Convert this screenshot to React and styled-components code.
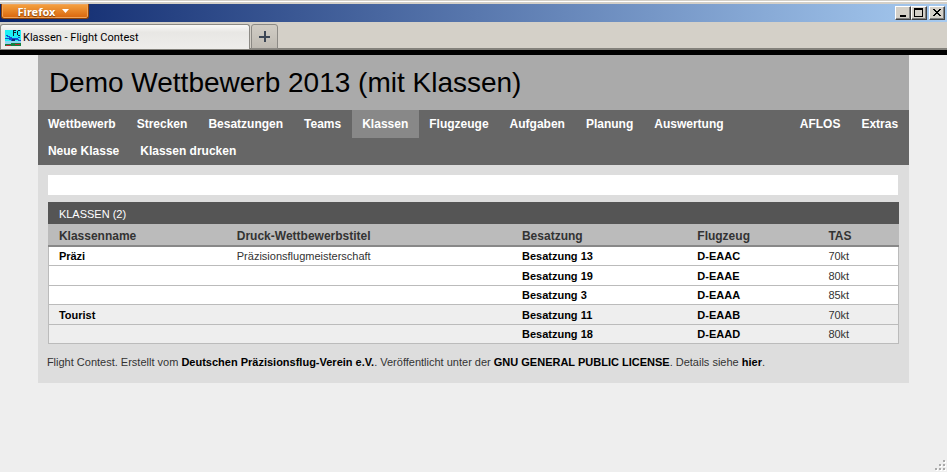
import React from "react";
import styled, { createGlobalStyle } from "styled-components";

const GlobalStyle = createGlobalStyle`
  * { box-sizing: border-box; }
  html, body { margin: 0; padding: 0; }
  body {
    background: #eee;
    color: #333;
    font: 11px/16px "Liberation Sans", Arial, sans-serif;
  }
  a { color: inherit; text-decoration: none; }
  button { font: inherit; padding: 0; margin: 0; }
`;

const Window = styled.div`
  display: flex;
  flex-direction: column;
  min-height: 100vh;
`;

const TitleBar = styled.header`
  display: flex;
  justify-content: space-between;
  align-items: flex-start;
  height: 22px;
  padding: 4px 2px 0 1px;
  background:
    linear-gradient(#d4d0c8 0 1px, #fff 1px 2px, #d4d0c8 2px 4px, transparent 4px),
    linear-gradient(to right, #0a246a, #a6caf0);
`;

const AppButton = styled.button`
  display: flex;
  align-items: center;
  justify-content: center;
  gap: 7px;
  width: 88px;
  height: 15px;
  padding-right: 3px;
  border: 1px solid #8d4308;
  border-top: 0;
  border-radius: 0 0 3px 3px;
  background: linear-gradient(#f5a341, #d9650c);
  box-shadow: inset 0 0 0 1px #f0a45a;
  color: #fff;
  font: bold 11px/15px "Noto Sans", sans-serif;
  text-shadow: 0 1px 1px #7a3a00;
`;

const WindowButtons = styled.div`
  display: flex;
  padding-top: 2px;
`;

const WindowButton = styled.button`
  display: grid;
  place-items: center;
  width: 16px;
  height: 14px;
  margin-left: ${(p) => (p.$spaced ? "2px" : "0")};
  border: 1px solid;
  border-color: #fff #404040 #404040 #fff;
  box-shadow: inset -1px -1px 0 #808080;
  background: #d4d0c8;
  color: #000;
`;

const TabStrip = styled.nav`
  display: flex;
  align-items: flex-end;
  gap: 1px;
  height: 33px;
  padding-bottom: 1px;
  border-bottom: 5px solid #000;
  background: linear-gradient(#d4d0c8 0 26px, #84827c 26px);
`;

const Tab = styled.button`
  display: flex;
  align-items: center;
  gap: 2px;
  width: 250px;
  height: 25px;
  padding: 1px 4px 0;
  border: 1px solid #8c8a85;
  border-bottom: 0;
  border-radius: 3px 3px 0 0;
  background: linear-gradient(#fafaf9, #e8e7e4 30%, #eeedeb);
  color: #000;
  font: 11px/16px Roboto, sans-serif;
`;

const NewTab = styled.button`
  display: grid;
  place-items: center;
  width: 27px;
  height: 25px;
  border: 1px solid #8c8a85;
  border-radius: 3px 3px 0 0;
  background: linear-gradient(#d0ccc4, #bfbbb3);
`;

const Page = styled.div`
  width: 92%;
  margin: 0 auto;
  background: #ddd;
`;

const Title = styled.h1`
  margin: 0;
  padding: 12px 11px 11px;
  background: #aaa;
  color: #000;
  font-size: 28px;
  font-weight: normal;
  line-height: 32px;
`;

const Menu = styled.nav`
  background: #666;
  padding-bottom: 1px;
`;

const MenuRow = styled.div`
  display: flex;
`;

const MenuLink = styled.a`
  padding: 0 11px 0 10px;
  background: ${(p) => (p.$active ? "#888" : "transparent")};
  color: #fff;
  font-size: 12px;
  font-weight: bold;
  line-height: ${(p) => (p.$sub ? "26px" : "28px")};
`;

const Spacer = styled.span`
  flex: 1;
`;

const Content = styled.main`
  padding: 10px 10px 0;
`;

const MessageBox = styled.div`
  height: 20px;
  margin: 0 1px 7px 0;
  background: #fff;
`;

const Table = styled.table`
  width: 100%;
  table-layout: fixed;
  border-spacing: 0;
`;

const Heading = styled.th`
  height: ${(p) => (p.$main ? "22px" : "23px")};
  padding: ${(p) => (p.$main ? "1px 11px 0" : "2px 11px 0")};
  border-bottom: ${(p) => (p.$main ? "0" : "2px solid #888")};
  background: ${(p) => (p.$main ? "#555" : "#bbb")};
  color: ${(p) => (p.$main ? "#fff" : "#333")};
  font-size: ${(p) => (p.$main ? "11px" : "12px")};
  font-weight: ${(p) => (p.$main ? "normal" : "bold")};
  text-align: left;
`;

const Row = styled.tr`
  height: 19px;
  background: ${(p) => (p.$shaded ? "#eee" : "#fff")};
  &:nth-child(even) { height: 20px; }
`;

const Cell = styled.td`
  padding: 0 11px;
  border-bottom: 1px solid #bbb;
  &:first-child { border-left: 1px solid #bbb; padding-left: 10px; }
  &:last-child { border-right: 1px solid #bbb; }
`;

const StrongLink = styled.a`
  color: #000;
  font-weight: bold;
`;

const Footer = styled.footer`
  padding: 10px 9px 13px;
`;

const Grip = styled.svg`
  align-self: flex-end;
  margin-top: auto;
`;

const Col = styled.col`
  width: ${(p) => p.$share}%;
`;

const menu = ["Wettbewerb", "Strecken", "Besatzungen", "Teams", "Klassen", "Flugzeuge", "Aufgaben", "Planung", "Auswertung"];
const extras = ["AFLOS", "Extras"];
const actions = ["Neue Klasse", "Klassen drucken"];
const headings = ["Klassenname", "Druck-Wettbewerbstitel", "Besatzung", "Flugzeug", "TAS"];
const shares = [20.9, 33.5, 20.6, 15.4, 9.6];
const rows = [
  { name: "Präzi", title: "Präzisionsflugmeisterschaft", crew: "Besatzung 13", plane: "D-EAAC", tas: "70kt" },
  { crew: "Besatzung 19", plane: "D-EAAE", tas: "80kt" },
  { crew: "Besatzung 3", plane: "D-EAAA", tas: "85kt" },
  { name: "Tourist", crew: "Besatzung 11", plane: "D-EAAB", tas: "70kt", shaded: true },
  { crew: "Besatzung 18", plane: "D-EAAD", tas: "80kt", shaded: true },
];

function Favicon() {
  return (
    <svg width="16" height="16" viewBox="0 0 16 16" shapeRendering="crispEdges" aria-hidden="true">
      <path fill="#1cf0f4" d="M0 0h16v16H0z" />
      <path fill="#8cd4ee" d="M0 11h16v3H0z" />
      <path fill="#12803c" d="M0 14h6v-1h10v3H0z" />
      <path fill="#b82830" d="M1 15h5v1H1zM10 14h5v1h-5z" />
      <path fill="#123" d="M8 0h3v1H9v1h2v1H9v3H8zM13 0h2v1h-2v4h2v1h-2V5h-1V1h1z" />
      <path fill="#1450d0" d="M1 5h2v1h2v1h2v1h4v1h3v1h2v1h-3v-1h-3v1H6v-1H4V9H0V8h4V7H2V6H1zM11 8h2V7h2v1h-2v1h-2z" />
      <path fill="#102a70" d="M7 9h3v2H7z" />
    </svg>
  );
}

export default function App() {
  return (
    <Window>
      <GlobalStyle />
      <TitleBar>
        <AppButton>
          Firefox
          <svg width="7" height="4" viewBox="0 0 7 4" aria-hidden="true">
            <path fill="#fff" d="M0 0h7L3.500 4z" />
          </svg>
        </AppButton>
        <WindowButtons>
          <WindowButton aria-label="Minimieren">
            <svg width="12" height="10" viewBox="0 0 12 10"><path d="M3 7h6v2H3z" /></svg>
          </WindowButton>
          <WindowButton aria-label="Maximieren">
            <svg width="12" height="10" viewBox="0 0 12 10" shapeRendering="crispEdges">
              <path fillRule="evenodd" d="M1 0h9v9H1zM2 2v6h7V2z" />
            </svg>
          </WindowButton>
          <WindowButton $spaced aria-label="Schließen">
            <svg width="12" height="10" viewBox="0 0 12 10" shapeRendering="crispEdges">
              <path d="M2 1h2v1h1v1h2V2h1V1h2v1H9v1H8v1H7v1h1v1h1v1h1v1H8V7H7V6H5v1H4v1H2V7h1V6h1V5h1V4H4V3H3V2H2z" />
            </svg>
          </WindowButton>
        </WindowButtons>
      </TitleBar>
      <TabStrip aria-label="Tabs">
        <Tab><Favicon />Klassen - Flight Contest</Tab>
        <NewTab aria-label="Neuer Tab">
          <svg width="11" height="11" viewBox="0 0 11 11" shapeRendering="crispEdges">
            <path fill="#3c4654" d="M5 0h2v5h4v2H7v4H5V7H0V5h5z" />
          </svg>
        </NewTab>
      </TabStrip>
      <Page>
        <Title>Demo Wettbewerb 2013 (mit Klassen)</Title>
        <Menu>
          <MenuRow>
            {menu.map((m) => <MenuLink href="#" key={m} $active={m === "Klassen"}>{m}</MenuLink>)}
            <Spacer />
            {extras.map((m) => <MenuLink href="#" key={m}>{m}</MenuLink>)}
          </MenuRow>
          <MenuRow>
            {actions.map((m) => <MenuLink href="#" key={m} $sub>{m}</MenuLink>)}
          </MenuRow>
        </Menu>
        <Content>
          <MessageBox />
          <Table>
            <colgroup>{shares.map((s, i) => <Col key={i} $share={s} />)}</colgroup>
            <thead>
              <tr><Heading colSpan={5} $main>KLASSEN (2)</Heading></tr>
              <tr>{headings.map((h) => <Heading key={h} scope="col">{h}</Heading>)}</tr>
            </thead>
            <tbody>
              {rows.map((r) => (
                <Row key={r.crew} $shaded={r.shaded}>
                  <Cell>{r.name && <StrongLink href="#">{r.name}</StrongLink>}</Cell>
                  <Cell>{r.title}</Cell>
                  <Cell><StrongLink href="#">{r.crew}</StrongLink></Cell>
                  <Cell><StrongLink href="#">{r.plane}</StrongLink></Cell>
                  <Cell>{r.tas}</Cell>
                </Row>
              ))}
            </tbody>
          </Table>
        </Content>
        <Footer>
          Flight Contest. Erstellt vom <StrongLink href="#">Deutschen Präzisionsflug-Verein e.V.</StrongLink>. Veröffentlicht unter der <StrongLink href="#">GNU GENERAL PUBLIC LICENSE</StrongLink>. Details siehe <StrongLink href="#">hier</StrongLink>.
        </Footer>
      </Page>
      <Grip width="12" height="12" viewBox="0 0 12 12" shapeRendering="crispEdges" aria-hidden="true">
        <path fill="#fff" d="M9 1h2v2H9zM5 5h2v2H5zM9 5h2v2H9zM1 9h2v2H1zM5 9h2v2H5zM9 9h2v2H9z" />
        <path fill="#aaa" d="M8 0h2v2H8zM4 4h2v2H4zM8 4h2v2H8zM0 8h2v2H0zM4 8h2v2H4zM8 8h2v2H8z" />
      </Grip>
    </Window>
  );
}
